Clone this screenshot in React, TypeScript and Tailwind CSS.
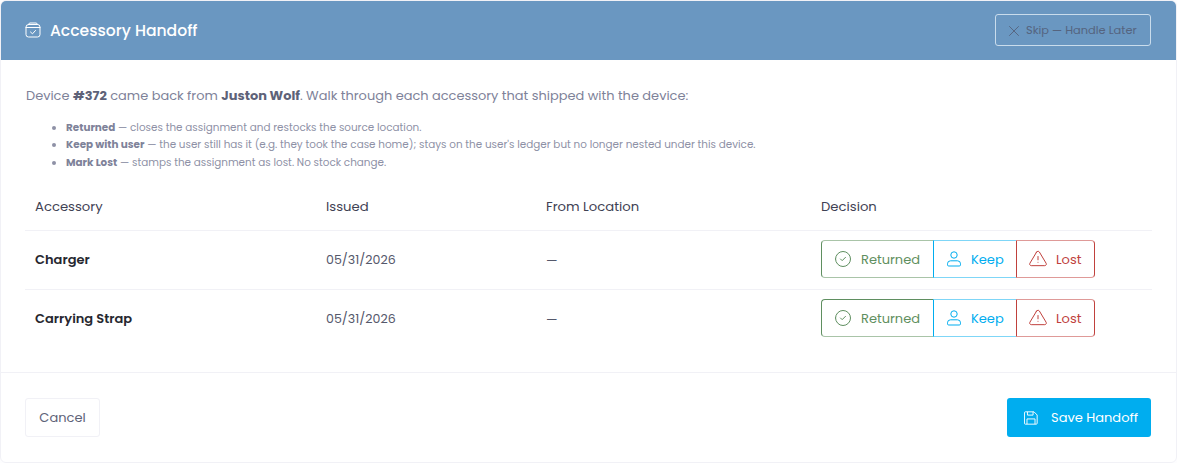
import { TbAlertTriangle, TbCircleCheck, TbX } from "react-icons/tb";

const rows = [
  { name: "Charger", issued: "05/31/2026", edge: "border-t-[#a9c4a8]" },
  { name: "Carrying Strap", issued: "05/31/2026", edge: "border-t-[#5f8f60]" },
];

const HandoffIcon = () => (
  <svg viewBox="0 0 16 16" className="w-4 h-4" fill="none" stroke="currentColor" strokeWidth="1" strokeLinecap="round" strokeLinejoin="round">
    <rect x="1" y="2.5" width="14" height="12.5" rx="2.5" />
    <path d="M1 5.5h14M3.5 2.5 4.5 1h7l1 1.5" />
    <path d="m5.5 10 2 1.8 3-3.3" />
  </svg>
);

const UserIcon = () => (
  <svg viewBox="0 0 14 16" className="w-[14px] h-4" fill="none" stroke="currentColor" strokeWidth="1">
    <circle cx="7" cy="4" r="3.2" />
    <path d="M3.5 9.8h7a3 3 0 0 1 3 3v1a1.2 1.2 0 0 1-1.2 1.2H1.7a1.2 1.2 0 0 1-1.2-1.2v-1a3 3 0 0 1 3-3z" />
  </svg>
);

const SaveIcon = () => (
  <svg viewBox="0 0 15 15" className="w-[14px] h-[14px]" fill="none" stroke="currentColor" strokeWidth="1" strokeLinejoin="round">
    <path d="M1.5.9h9.2l3.4 3.4v8.8a1 1 0 0 1-1 1H1.5a1 1 0 0 1-1-1V1.9a1 1 0 0 1 1-1z" />
    <path d="M3.7.9v3.5h6V.9M3.2 14V8.5h8.6V14" />
  </svg>
);

const Decision = ({ edge }: { edge: string }) => (
  <div className="flex h-[38px] w-[274px] text-[13px]">
    <button className={`flex items-center w-[112px] pl-[11px] gap-[8px] border border-r-0 border-[#5f8f60] border-b-[#a9c4a8] rounded-l-[4px] text-[#5f8f60] ${edge}`}>
      <TbCircleCheck className="w-5 h-5 stroke-[1.2]" />
      Returned
    </button>
    <button className="flex items-center w-[83px] pl-[13px] gap-[10px] border border-r-0 border-[#00adef] border-t-[#7fd6f7] border-b-[#7fd6f7] text-[#00adef]">
      <UserIcon />
      Keep
    </button>
    <button className="flex items-center w-[79px] pl-[11px] gap-[8px] border border-[#c0413d] border-t-[#df9a98] border-b-[#df9a98] rounded-r-[4px] text-[#c0413d]">
      <TbAlertTriangle className="w-5 h-5 stroke-[1.2]" />
      Lost
    </button>
  </div>
);

export default function App() {
  return (
    <div className="w-[1177px] h-[463px] bg-[#fdfdfe] font-['Poppins','Inter',sans-serif]">
      <div className="h-[463px] bg-white border border-[#f1f1f6] rounded-[6px] overflow-hidden flex flex-col">
        <div className="h-[59px] bg-[#6a97c1] flex items-center justify-between pl-[24px] pr-[25px] shrink-0">
          <div className="flex items-center gap-[9px] text-white text-[15.6px] font-medium">
            <HandoffIcon />
            Accessory Handoff
          </div>
          <button className="flex items-center h-[32px] mb-[1px] w-[156px] pl-[9px] pt-[1px] gap-[3px] border border-[#c9dcec] rounded-[3px] text-[#55647f] text-[11.4px]">
            <TbX className="w-[18px] h-[18px] stroke-[1.25]" />
            Skip — Handle Later
          </button>
        </div>

        <div className="pt-[26px] px-[24px] h-[313px] border-b border-[#f1f1f6] shrink-0">
          <p className="pl-[1px] text-[#7e8299] text-[12.95px] leading-[20px]">
            Device <strong className="text-[#5e6278]">#372</strong> came back from <strong className="text-[#5e6278]">Juston Wolf</strong>. Walk through each accessory that shipped with the device:
          </p>
          <ul className="mt-[12.5px] pl-[41px] list-disc text-[#8e91a6] text-[10.4px] leading-[17.6px]">
            <li><strong className="text-[#7e8299]">Returned</strong> — closes the assignment and restocks the source location.</li>
            <li><strong className="text-[#7e8299]">Keep with user</strong> — the user still has it (e.g. they took the case home); stays on the user's ledger but no longer nested under this device.</li>
            <li><strong className="text-[#7e8299]">Mark Lost</strong> — stamps the assignment as lost. No stock change.</li>
          </ul>
          <div className="mt-[12px] grid grid-cols-[291px_220px_275px_1fr] w-[1127px] h-[48px] pt-[1px] items-center pl-[10px] border-b border-[#f1f1f6] text-[13.2px] text-[#3f4254]">
            <div>Accessory</div>
            <div>Issued</div>
            <div>From Location</div>
            <div>Decision</div>
          </div>
          {rows.map((row, i) => (
            <div key={row.name} className={`grid grid-cols-[291px_220px_275px_1fr] w-[1127px] h-[59px] pb-[2px] items-center pl-[10px] border-b text-[13px] text-[#55586b] ${i === 0 ? "border-[#f1f1f6]" : "border-transparent"}`}>
              <div className="font-semibold text-[#26272f]">{row.name}</div>
              <div className="pt-[2px] text-[12.6px]">{row.issued}</div>
              <div className="pt-[2px]">—</div>
              <Decision edge={row.edge} />
            </div>
          ))}
        </div>

        <div className="flex-1 flex items-center justify-between pl-[24px] pr-[25px]">
          <button className="h-[39px] w-[75px] border border-[#f1f1f6] rounded-[3px] text-[13px] text-[#5e6278]">Cancel</button>
          <button className="h-[39px] w-[144px] flex items-center pl-[17px] gap-[13px] bg-[#00adef] rounded-[3px] text-white text-[13px]">
            <SaveIcon />
            Save Handoff
          </button>
        </div>
      </div>
    </div>
  );
}
